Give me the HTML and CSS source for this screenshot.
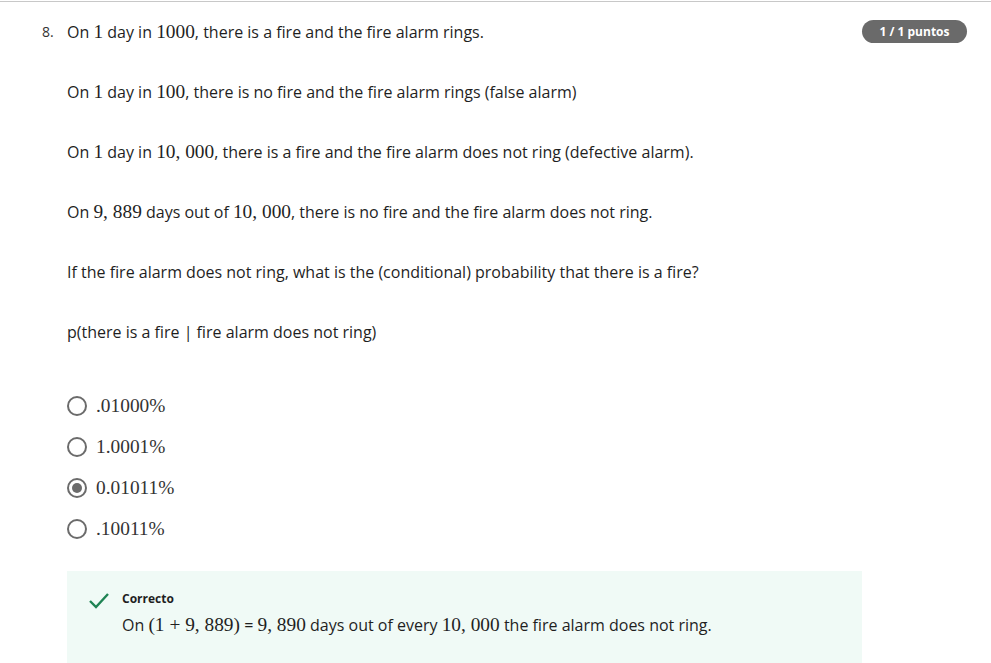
FILE: index.html
```html
<!DOCTYPE html>
<html>
<head>
<meta charset="utf-8">
<link rel="stylesheet" href="styles.css">
</head>
<body>
<div class="page">
  <div class="question">
    <div class="qnum">8.</div>
    <div class="qbody">
      <p class="para">On <span class="m">1</span> day in <span class="m">1000</span>, there is a fire and the fire alarm rings.</p>
      <p class="para">On <span class="m">1</span> day in <span class="m">100</span>, there is no fire and the fire alarm rings (false alarm)</p>
      <p class="para">On <span class="m">1</span> day in <span class="m">10, 000</span>, there is a fire and the fire alarm does not ring (defective alarm).</p>
      <p class="para">On <span class="m">9, 889</span> days out of <span class="m">10, 000</span>, there is no fire and the fire alarm does not ring.</p>
      <p class="para">If the fire alarm does not ring, what is the (conditional) probability that there is a fire?</p>
      <p class="para last">p(there is a fire | fire alarm does not ring)</p>

      <div class="options">
        <div class="opt"><span class="radio"></span><span class="m">.01000%</span></div>
        <div class="opt"><span class="radio"></span><span class="m">1.0001%</span></div>
        <div class="opt"><span class="radio checked"></span><span class="m">0.01011%</span></div>
        <div class="opt"><span class="radio"></span><span class="m">.10011%</span></div>
      </div>

      <div class="feedback">
        <svg class="check" width="22" height="18" viewBox="0 0 22 18"><path d="M2 10 L8 16 L20 3" fill="none" stroke="#1f8354" stroke-width="2.4"/></svg>
        <div class="fbtext">
          <div class="fbtitle">Correcto</div>
          <div class="fbmsg">On <span class="m">(1 + 9, 889)</span> = <span class="m">9, 890</span> days out of every <span class="m">10, 000</span> the fire alarm does not ring.</div>
        </div>
      </div>
    </div>
    <div class="badge">1 / 1 puntos</div>
  </div>
</div>
</body>
</html>
```

FILE: styles.css
```css
html, body {
  margin: 0;
  padding: 0;
  background: #fff;
}
body {
  padding-top: 1px;
  font-family: "Open Sans", "Liberation Sans", sans-serif;
  color: #1f1f1f;
  overflow: hidden;
}
.page {
  border-top: 1px solid #c8c8c8;
  height: 700px;
}
.question {
  display: flex;
  align-items: flex-start;
  padding: 18px 24px 0 42px;
}
.qnum {
  width: 25px;
  flex: none;
  font-size: 14px;
  line-height: 24px;
  color: #333;
}
.qbody {
  flex: none;
  width: 795px;
}
.para {
  margin: 0 0 36px;
  font-size: 16px;
  line-height: 24px;
}
.para.last {
  margin-bottom: 41px;
}
.m {
  font-family: "Liberation Serif", "Times New Roman", serif;
  font-size: 1.21em;
  line-height: 1;
}
.options {
  display: flex;
  flex-direction: column;
}
.opt {
  display: flex;
  align-items: center;
  height: 41px;
  font-size: 16px;
  color: #1f1f1f;
}
.opt .m {
  color: #333;
}
.radio {
  width: 16px;
  height: 16px;
  border: 2px solid #6b6b6b;
  border-radius: 50%;
  box-sizing: content-box;
  margin-right: 9px;
  position: relative;
  flex: none;
}
.radio.checked::after {
  content: "";
  position: absolute;
  left: 3px;
  top: 3px;
  width: 10px;
  height: 10px;
  border-radius: 50%;
  background: #6b6b6b;
}
.feedback {
  margin-top: 22px;
  background: #f0faf6;
  display: flex;
  align-items: flex-start;
  padding: 19px 0 30px 21px;
}
.check {
  flex: none;
  margin-right: 12px;
  margin-top: 1px;
}
.fbtitle {
  font-size: 12px;
  font-weight: 700;
  line-height: 18px;
  color: #1f1f1f;
}
.fbmsg {
  margin-top: 5px;
  font-size: 16px;
  line-height: 24px;
}
.badge {
  margin-left: auto;
  margin-top: 0;
  background: #6a6a6a;
  color: #fff;
  font-size: 12px;
  font-weight: 700;
  line-height: 23px;
  height: 23px;
  width: 105px;
  text-align: center;
  border-radius: 12px;
  flex: none;
}
```
